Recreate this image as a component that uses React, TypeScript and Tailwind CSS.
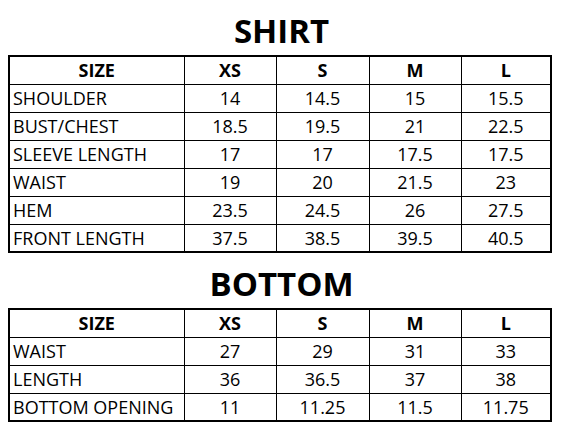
import React from "react";

const cols = ["XS", "S", "M", "L"];

const shirt: [string, string[]][] = [
  ["SHOULDER", ["14", "14.5", "15", "15.5"]],
  ["BUST/CHEST", ["18.5", "19.5", "21", "22.5"]],
  ["SLEEVE LENGTH", ["17", "17", "17.5", "17.5"]],
  ["WAIST", ["19", "20", "21.5", "23"]],
  ["HEM", ["23.5", "24.5", "26", "27.5"]],
  ["FRONT LENGTH", ["37.5", "38.5", "39.5", "40.5"]],
];

const bottom: [string, string[]][] = [
  ["WAIST", ["27", "29", "31", "33"]],
  ["LENGTH", ["36", "36.5", "37", "38"]],
  ["BOTTOM OPENING", ["11", "11.25", "11.5", "11.75"]],
];

function SizeTable({ rows }: { rows: [string, string[]][] }) {
  return (
    <table className="ml-[8px] w-[542px] border-collapse border-2 border-black table-fixed">
      <colgroup>
        <col className="w-[175px]" />
        <col className="w-[92px]" />
        <col className="w-[93px]" />
        <col className="w-[92px]" />
        <col className="w-[90px]" />
      </colgroup>
      <tbody>
        <tr className="h-[28px]">
          <td className="border border-black text-center font-bold p-0">SIZE</td>
          {cols.map((c) => (
            <td key={c} className="border border-black text-center font-bold p-0">
              {c}
            </td>
          ))}
        </tr>
        {rows.map(([label, vals]) => (
          <tr key={label} className="h-[28px]">
            <td className="border border-black p-0 pl-[3px] whitespace-nowrap">{label}</td>
            {vals.map((v, i) => (
              <td key={i} className="border border-black text-center p-0">
                {v}
              </td>
            ))}
          </tr>
        ))}
      </tbody>
    </table>
  );
}

export default function App() {
  return (
    <div
      className="w-[563px] h-[437px] bg-white text-black text-[18px] leading-[24px]"
      style={{ fontFamily: '"Open Sans", sans-serif' }}
    >
      <div className="h-[55px] flex items-end justify-center">
        <span className="text-[33px] font-bold leading-[48px]">SHIRT</span>
      </div>
      <SizeTable rows={shirt} />
      <div className="h-[55px] flex items-end justify-center">
        <span className="text-[33px] font-bold leading-[48px]">BOTTOM</span>
      </div>
      <SizeTable rows={bottom} />
    </div>
  );
}
